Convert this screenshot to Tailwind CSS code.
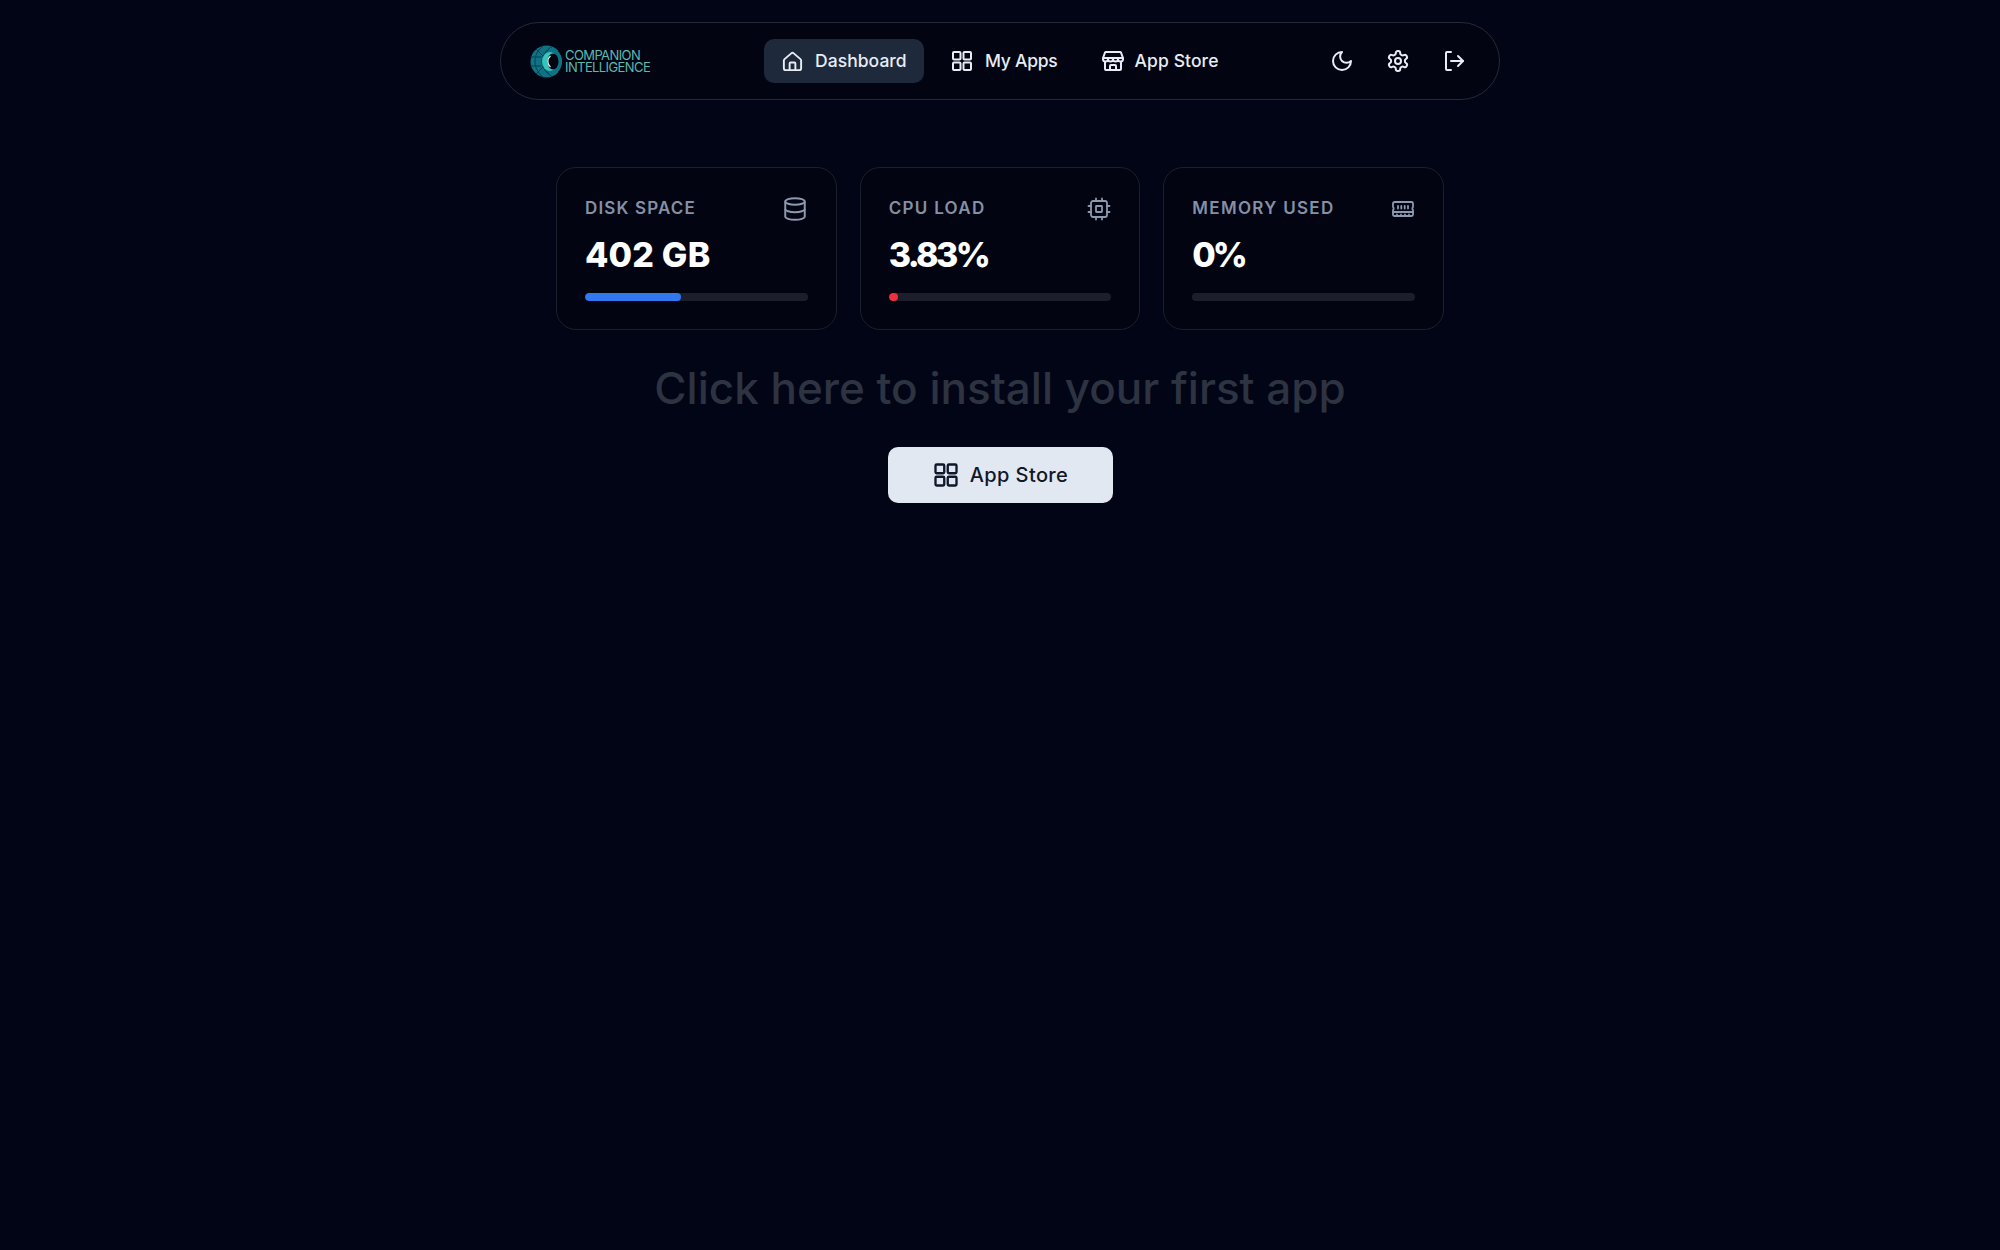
<!DOCTYPE html>
<html lang="en">
<head>
<meta charset="utf-8">
<title>Dashboard</title>
<script src="https://cdn.jsdelivr.net/npm/@tailwindcss/browser@4"></script>
</head>
<body class="min-h-[1250px] bg-[#020516] font-['Inter',sans-serif] text-white">
<nav class="mx-auto mt-[22px] flex h-[78px] w-[1000px] items-center rounded-full border border-[#252a38] bg-[#020412] pl-[29px] pr-[33px]">
  <div class="flex w-[234px] shrink-0 items-center gap-[2px]">
    <svg class="h-[33px] w-[33px] shrink-0" viewBox="0 0 33 33" fill="none">
      <circle cx="16.5" cy="16.5" r="16" fill="#0e7384"/>
      <path d="M13 .8C7 6 5 11 5 16.500S7 27 13 32.200M22 1.500C16 5 12 11 12 16.500S16 28 22 31.500M.5 12h11M.5 21h11M6 4l8 8M6 29l8-8M14 9l8-8M14 24l8 8" stroke="#07404f" stroke-width="1"/>
      <ellipse cx="20" cy="16.500" rx="8" ry="9.500" fill="#38c4be"/>
      <ellipse cx="23" cy="16.500" rx="5.500" ry="8" fill="#02040f"/>
      <path d="M20.500 11a7 7 0 0 0 0 11" stroke="#e6f6f5" stroke-width="1.200"/>
      <path d="M28.500 5.500a16 16 0 0 1 0 22" stroke="#02040f" stroke-width="1.500"/>
    </svg>
    <div class="text-[13px] leading-[12.500px] tracking-[-.6px] text-[#5db9ad]">
      <div>COMPANION</div>
      <div>INTELLIGENCE</div>
    </div>
  </div>
  <div class="flex items-center text-[17.500px] font-medium tracking-[.1px] text-[#e8edf5]">
    <a class="flex h-[44px] w-[160px] items-center gap-[11px] rounded-[10px] bg-[#1e293b] pl-[17px]">
      <svg class="h-[23px] w-[23px]" viewBox="0 0 24 24" fill="none" stroke="currentColor" stroke-width="2" stroke-linecap="round" stroke-linejoin="round"><path d="M9 21v-7a1 1 0 0 1 1-1h4a1 1 0 0 1 1 1v7"/><path d="M3 11a2 2 0 0 1 .7-1.500l7-6a2 2 0 0 1 2.600 0l7 6A2 2 0 0 1 21 11v8a2 2 0 0 1-2 2H5a2 2 0 0 1-2-2z"/></svg>
      <span class="tracking-[.05px]">Dashboard</span>
    </a>
    <a class="ml-[26px] flex items-center gap-[11px]">
      <svg class="h-[24px] w-[24px]" viewBox="0 0 24 24" fill="none" stroke="currentColor" stroke-width="2"><rect x="3" y="3" width="7.500" height="7.500" rx="1"/><rect x="13.500" y="3" width="7.500" height="7.500" rx="1"/><rect x="3" y="13.500" width="7.500" height="7.500" rx="1"/><rect x="13.500" y="13.500" width="7.500" height="7.500" rx="1"/></svg>
      <span class="tracking-[-.25px]">My Apps</span>
    </a>
    <a class="ml-[43px] flex items-center gap-[10px]">
      <svg class="h-[24px] w-[24px]" viewBox="0 0 24 24" fill="none" stroke="currentColor" stroke-width="2" stroke-linecap="round" stroke-linejoin="round"><path d="M5 3h14a1 1 0 0 1 1 .700L22 9v1a2.500 2.500 0 0 1-5 0 2.500 2.500 0 0 1-5 0 2.500 2.500 0 0 1-5 0 2.500 2.500 0 0 1-5 0V9l2-5.300A1 1 0 0 1 5 3z"/><path d="M2.500 9h19"/><path d="M4 13v7a1 1 0 0 0 1 1h14a1 1 0 0 0 1-1v-7"/><path d="M9 21v-4a1 1 0 0 1 1-1h4a1 1 0 0 1 1 1v4"/></svg>
      App Store
    </a>
  </div>
  <div class="ml-auto flex items-center gap-[32px] text-[#e8edf5]">
    <svg class="h-[24px] w-[24px]" viewBox="0 0 24 24" fill="none" stroke="currentColor" stroke-width="2" stroke-linecap="round" stroke-linejoin="round"><path d="M12 3a6 6 0 0 0 9 9 9 9 0 1 1-9-9Z"/></svg>
    <svg class="h-[24px] w-[24px]" viewBox="0 0 24 24" fill="none" stroke="currentColor" stroke-width="2" stroke-linecap="round" stroke-linejoin="round"><path d="M12.220 2h-.440a2 2 0 0 0-2 2v.180a2 2 0 0 1-1 1.730l-.430.250a2 2 0 0 1-2 0l-.150-.080a2 2 0 0 0-2.730.730l-.220.380a2 2 0 0 0 .730 2.730l.150.100a2 2 0 0 1 1 1.720v.510a2 2 0 0 1-1 1.740l-.150.090a2 2 0 0 0-.730 2.730l.220.380a2 2 0 0 0 2.730.730l.150-.080a2 2 0 0 1 2 0l.430.250a2 2 0 0 1 1 1.730V20a2 2 0 0 0 2 2h.440a2 2 0 0 0 2-2v-.180a2 2 0 0 1 1-1.730l.430-.250a2 2 0 0 1 2 0l.150.080a2 2 0 0 0 2.730-.730l.220-.390a2 2 0 0 0-.730-2.730l-.150-.080a2 2 0 0 1-1-1.740v-.500a2 2 0 0 1 1-1.740l.150-.090a2 2 0 0 0 .730-2.730l-.220-.380a2 2 0 0 0-2.730-.730l-.150.080a2 2 0 0 1-2 0l-.430-.250a2 2 0 0 1-1-1.730V4a2 2 0 0 0-2-2z"/><circle cx="12" cy="12" r="3"/></svg>
    <svg class="h-[24px] w-[24px]" viewBox="0 0 24 24" fill="none" stroke="currentColor" stroke-width="2" stroke-linecap="round" stroke-linejoin="round"><path d="M9 21H5a1 1 0 0 1-1-1V4a1 1 0 0 1 1-1h4"/><path d="m16 17 5-5-5-5"/><path d="M21 12H9"/></svg>
  </div>
</nav>

<main class="mx-auto flex w-[888px] flex-col items-center pt-[67px]">
  <div class="grid w-full grid-cols-3 gap-[23px]">
    <div class="h-[163px] rounded-[20px] border border-[#1b202c] bg-[#020412] pl-[28px] pr-[28px] pt-[29px]">
      <div class="flex h-[24px] items-center justify-between">
        <span class="text-[17px] font-semibold tracking-[1.150px] text-[#8490a6]">DISK SPACE</span>
        <svg class="h-[26px] w-[26px] text-[#8d99ae]" viewBox="0 0 24 24" fill="none" stroke="currentColor" stroke-width="1.800"><ellipse cx="12" cy="5" rx="9" ry="3"/><path d="M3 5v14c0 1.660 4 3 9 3s9-1.340 9-3V5"/><path d="M3 12c0 1.660 4 3 9 3s9-1.340 9-3"/></svg>
      </div>
      <div class="mt-[10px] text-[34px] leading-[48px] font-extrabold tracking-[.2px]">402 GB</div>
      <div class="mt-[14px] h-[8px] overflow-hidden rounded-full bg-[#1c1f2b]"><div class="h-full w-[43%] rounded-full bg-[#3079f0]"></div></div>
    </div>
    <div class="h-[163px] rounded-[20px] border border-[#1b202c] bg-[#020412] pl-[28px] pr-[28px] pt-[29px]">
      <div class="flex h-[24px] items-center justify-between">
        <span class="text-[17px] font-semibold tracking-[1.300px] text-[#8490a6]">CPU LOAD</span>
        <svg class="h-[24px] w-[24px] text-[#8d99ae]" viewBox="0 0 24 24" fill="none" stroke="currentColor" stroke-width="1.800" stroke-linecap="round"><rect x="4" y="4" width="16" height="16" rx="2"/><rect x="9" y="9" width="6" height="6" rx=".5"/><path d="M9 1.500V4M15 1.500V4M9 20v2.500M15 20v2.500M1.500 9H4M1.500 15H4M20 9h2.500M20 15h2.500"/></svg>
      </div>
      <div class="mt-[10px] text-[34px] leading-[48px] font-extrabold tracking-[-2.600px]">3.83%</div>
      <div class="mt-[14px] h-[8px] overflow-hidden rounded-full bg-[#1c1f2b]"><div class="h-full w-[4%] rounded-full bg-[#ef2f3c]"></div></div>
    </div>
    <div class="h-[163px] rounded-[20px] border border-[#1b202c] bg-[#020412] pl-[28px] pr-[28px] pt-[29px]">
      <div class="flex h-[24px] items-center justify-between">
        <span class="text-[17px] font-semibold tracking-[1.300px] text-[#8490a6]">MEMORY USED</span>
        <svg class="h-[24px] w-[24px] text-[#8d99ae]" viewBox="0 0 24 24" fill="none" stroke="currentColor" stroke-width="1.800" stroke-linecap="round" stroke-linejoin="round"><path d="M2 6.500A1.500 1.500 0 0 1 3.500 5h17A1.500 1.500 0 0 1 22 6.500V10a2 2 0 0 0 0 3v4.500a1.500 1.500 0 0 1-1.500 1.500h-17A1.500 1.500 0 0 1 2 17.500V13a2 2 0 0 0 0-3z"/><path d="M2 15h20M7 9v2.500M10.300 9v2.500M13.700 9v2.500M17 9v2.500M6 17.500v.1M10 17.500v.1M14 17.500v.1M18 17.500v.1"/></svg>
      </div>
      <div class="mt-[10px] text-[34px] leading-[48px] font-extrabold tracking-[-3px]">0%</div>
      <div class="mt-[14px] h-[8px] overflow-hidden rounded-full bg-[#1c1f2b]"></div>
    </div>
  </div>
  <h1 class="mt-[30px] text-[44px] leading-[56px] font-medium text-[#2d3341]">Click here to install your first app</h1>
  <a class="mt-[31px] flex h-[56px] w-[225px] items-center justify-center gap-[10px] rounded-[10px] bg-[#e2e8f2] text-[20px] font-medium tracking-[.4px] text-[#0f172a]">
    <svg class="h-[28px] w-[28px]" viewBox="0 0 24 24" fill="none" stroke="currentColor" stroke-width="2"><rect x="3" y="3" width="7.500" height="7.500" rx="1"/><rect x="13.500" y="3" width="7.500" height="7.500" rx="1"/><rect x="3" y="13.500" width="7.500" height="7.500" rx="1"/><rect x="13.500" y="13.500" width="7.500" height="7.500" rx="1"/></svg>
    App Store
  </a>
</main>
</body>
</html>
